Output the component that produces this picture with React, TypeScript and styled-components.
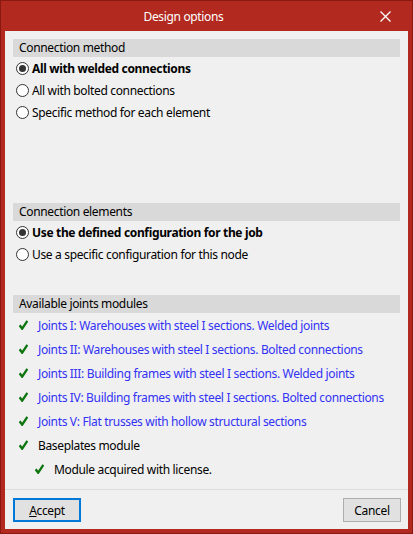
import React from "react";
import styled, { createGlobalStyle } from "styled-components";

const GlobalStyle = createGlobalStyle`
  html, body {
    margin: 0;
    padding: 0;
    background: #ffffff;
  }
  * {
    box-sizing: border-box;
  }
`;

const Frame = styled.div`
  width: 413px;
  height: 534px;
  display: flex;
  flex-direction: column;
  background: #b2291f;
  border: 1px solid #8a1911;
  padding: 0 4px 4px;
  font-family: "Noto Sans", "Open Sans", sans-serif;
  font-size: 12px;
  letter-spacing: -0.34px;
  color: #000;
  white-space: nowrap;
`;

const TitleBar = styled.div`
  height: 30px;
  display: flex;
  align-items: center;
  color: #fff;
`;

const Title = styled.div`
  flex: 1;
  text-align: center;
  padding-top: 1px;
`;

const CloseButton = styled.div`
  width: 46px;
  height: 30px;
  display: flex;
  align-items: center;
  justify-content: center;
`;

const Body = styled.div`
  flex: 1;
  display: flex;
  flex-direction: column;
  background: #f0f0f0;
  padding: 8px 8px 0;
`;

const Section = styled.div<{ $height?: number }>`
  display: flex;
  flex-direction: column;
  height: ${(p) => (p.$height ? `${p.$height}px` : "auto")};
`;

const SectionHeader = styled.div`
  height: 18px;
  line-height: 18px;
  background: #d9d9d9;
  padding-left: 6px;
`;

const RadioRow = styled.div<{ $checked?: boolean }>`
  height: 22px;
  display: flex;
  align-items: center;
  gap: 3px;
  padding-left: 3px;
  font-weight: ${(p) => (p.$checked ? 700 : 400)};
`;

const RadioCircle = styled.span<{ $checked?: boolean }>`
  flex-shrink: 0;
  width: 13px;
  height: 13px;
  border-radius: 50%;
  border: 1px solid #333;
  background: #fff;
  display: flex;
  align-items: center;
  justify-content: center;

  &::after {
    content: "";
    width: 7px;
    height: 7px;
    border-radius: 50%;
    background: ${(p) => (p.$checked ? "#333" : "transparent")};
  }
`;

const ModuleRow = styled.div<{ $indent?: number; $link?: boolean }>`
  height: 24px;
  display: flex;
  align-items: center;
  gap: 10px;
  padding-left: ${(p) => 6 + (p.$indent ?? 0)}px;
  color: ${(p) => (p.$link ? "#3232f5" : "#000")};

  svg {
    flex-shrink: 0;
  }
`;

const Footer = styled.div`
  margin: auto -8px 0;
  border-top: 1px solid #dcdcdc;
  padding: 8px 7px 7px 8px;
  display: flex;
  justify-content: space-between;
`;

const Button = styled.button<{ $primary?: boolean }>`
  height: 24px;
  width: ${(p) => (p.$primary ? 68 : 58)}px;
  background: #e1e1e1;
  border: ${(p) => (p.$primary ? "2px solid #0078d7" : "1px solid #adadad")};
  font-family: inherit;
  font-size: 12px;
  letter-spacing: inherit;
  color: #000;
  padding: 0;
`;

const Check = () => (
  <svg width="9" height="10" viewBox="0 0 9 10">
    <path d="M0.6 5.2 L3.2 8.6 L8.4 0.8" fill="none" stroke="#0f760f" strokeWidth="2.4" />
  </svg>
);

const Radio = ({ label, checked }: { label: string; checked?: boolean }) => (
  <RadioRow $checked={checked}>
    <RadioCircle $checked={checked} />
    {label}
  </RadioRow>
);

const modules = [
  "Joints I: Warehouses with steel I sections. Welded joints",
  "Joints II: Warehouses with steel I sections. Bolted connections",
  "Joints III: Building frames with steel I sections. Welded joints",
  "Joints IV: Building frames with steel I sections. Bolted connections",
  "Joints V: Flat trusses with hollow structural sections",
];

export default function App() {
  return (
    <>
      <GlobalStyle />
      <Frame>
        <TitleBar>
          <Title>Design options</Title>
          <CloseButton>
            <svg width="11" height="11" viewBox="0 0 11 11">
              <path d="M0.5 0.5 L10.5 10.5 M10.5 0.5 L0.5 10.5" stroke="#fff" strokeWidth="1.3" />
            </svg>
          </CloseButton>
        </TitleBar>
        <Body>
          <Section $height={164}>
            <SectionHeader>Connection method</SectionHeader>
            <Radio label="All with welded connections" checked />
            <Radio label="All with bolted connections" />
            <Radio label="Specific method for each element" />
          </Section>
          <Section $height={92}>
            <SectionHeader>Connection elements</SectionHeader>
            <Radio label="Use the defined configuration for the job" checked />
            <Radio label="Use a specific configuration for this node" />
          </Section>
          <Section>
            <SectionHeader>Available joints modules</SectionHeader>
            {modules.map((m) => (
              <ModuleRow key={m} $link>
                <Check />
                {m}
              </ModuleRow>
            ))}
            <ModuleRow>
              <Check />
              Baseplates module
            </ModuleRow>
            <ModuleRow $indent={16}>
              <Check />
              Module acquired with license.
            </ModuleRow>
          </Section>
          <Footer>
            <Button $primary>
              <u>A</u>ccept
            </Button>
            <Button>Cancel</Button>
          </Footer>
        </Body>
      </Frame>
    </>
  );
}
